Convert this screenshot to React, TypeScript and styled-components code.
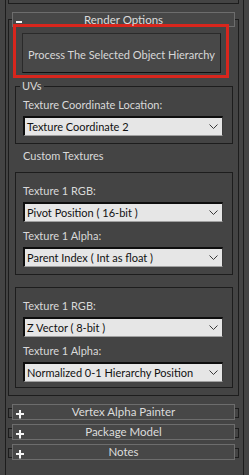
import styled, { createGlobalStyle } from "styled-components";

const GlobalStyle = createGlobalStyle`
    html, body {
        margin: 0;
        background: #444444;
    }
    body {
        font-family: Lato, "Liberation Sans", sans-serif;
        font-size: 11px;
        color: #d9d9d9;
    }
`;

const Page = styled.div`
    width: 249px;
    height: 475px;
    overflow: hidden;
    box-sizing: border-box;
    padding-left: 5px;
    background: #444444;
`;

const Frame = styled.div`
    width: 239px;
    height: 100%;
    box-sizing: border-box;
    border-left: 1px solid #1d1d1d;
    border-right: 1px solid #1d1d1d;
`;

const PrevTail = styled.div`
    height: 4px;
    box-sizing: border-box;
    margin: 0 4px 0 2px;
    border: 1px solid #1d1d1d;
    border-top: 0;
`;

const Rollout = styled.div`
    margin: 15px 4px 0 2px;
    border: 1px solid #1d1d1d;
    padding-bottom: 7px;
`;

const ClosedRollout = styled.div<{ $first?: boolean }>`
    margin: ${(p) => (p.$first ? "12px" : "10px")} 4px 0 2px;
    border: 1px solid #1d1d1d;
`;

const Header = styled.div<{ $closed?: boolean }>`
    display: grid;
    grid-template-columns: 20px 1fr 20px;
    height: ${(p) => (p.$closed ? "16px" : "15px")};
    box-sizing: border-box;
    margin: ${(p) => (p.$closed ? "-5px 3px -3px" : "-8px 3px 0")};
    border: 1px solid #6d6d6d;
    background: #474747;
    color: #dcdcdc;
    line-height: ${(p) => (p.$closed ? "14px" : "13px")};
    font-size: 11.5px;
`;

const HeaderTitle = styled.span`
    text-align: center;
    white-space: nowrap;
`;

const Sign = styled.svg`
    display: block;
    margin: 5px 0 0 3px;
`;

const Highlight = styled.div`
    display: flex;
    width: 216px;
    height: 54px;
    box-sizing: border-box;
    margin: -3px 0 0 4px;
    border: 3px solid #d8261d;
    padding: 6px 5px 2px 6px;
`;

const ActionButton = styled.button`
    flex: 1;
    margin: 0;
    padding: 3px 0 0;
    font-family: inherit;
    font-size: 11px;
    color: #d8d8d8;
    background: #484848;
    border: 1px solid #2a2a2a;
    border-right-color: #1a1a1a;
    border-bottom-color: #101010;
`;

const GroupBox = styled.fieldset`
    min-width: 0;
    margin: 2px 5px 0 6px;
    padding: 0 9px 7px 4px;
    border: 1px solid #1d1d1d;
`;

const Legend = styled.legend`
    padding: 0 2px;
    line-height: 12px;
    font-size: 11px;
`;

const Group = styled.div<{ $gap: number; $bottom: number }>`
    margin: ${(p) => p.$gap}px 5px 0 6px;
    border: 1px solid #1d1d1d;
    padding: 11px 9px ${(p) => p.$bottom}px 7px;
`;

const Label = styled.div<{ $top?: number; $left?: number }>`
    margin: ${(p) => p.$top ?? 0}px 0 0 ${(p) => p.$left ?? 0}px;
    line-height: 14px;
    white-space: nowrap;
`;

const Select = styled.div<{ $left?: number }>`
    display: flex;
    align-items: center;
    justify-content: space-between;
    height: 20px;
    box-sizing: border-box;
    margin: 4px 0 0 ${(p) => p.$left ?? 0}px;
    padding: 0 4px 0 2px;
    background: #e6e6e6;
    border-top: 2px solid #0e0e0e;
    border-left: 2px solid #0e0e0e;
    border-right: 1px solid #3c3c3c;
    border-bottom: 1px solid #a0a0a0;
    color: #111111;
    white-space: nowrap;
`;

const Chevron = () => (
    <svg width="9" height="5" viewBox="0 0 9 5">
        <polyline points="0.5,0.5 4.5,4.5 8.5,0.5" fill="none" stroke="#3a3a3a" strokeWidth="1" />
    </svg>
);

function Toggle({ open }: { open?: boolean }) {
    return (
        <Sign width="9" height="9" viewBox="0 0 9 9">
            {open ? (
                <rect x="0" y="3" width="6" height="2" fill="#f4f4f4" />
            ) : (
                <>
                    <rect x="0" y="3" width="8" height="2" fill="#f4f4f4" />
                    <rect x="3" y="0" width="2" height="8.5" fill="#f4f4f4" />
                </>
            )}
        </Sign>
    );
}

function Dropdown({ value, left }: { value: string; left?: number }) {
    return (
        <Select $left={left}>
            <span>{value}</span>
            <Chevron />
        </Select>
    );
}

function TextureSet({ gap, bottom, rgb, alpha }: { gap: number; bottom: number; rgb: string; alpha: string }) {
    return (
        <Group $gap={gap} $bottom={bottom}>
            <Label>Texture 1 RGB:</Label>
            <Dropdown value={rgb} />
            <Label $top={7}>Texture 1 Alpha:</Label>
            <Dropdown value={alpha} />
        </Group>
    );
}

const closed = ["Vertex Alpha Painter", "Package Model", "Notes"];

export default function App() {
    return (
        <Page>
            <GlobalStyle />
            <Frame>
                <PrevTail />
                <Rollout>
                    <Header>
                        <Toggle open />
                        <HeaderTitle>Render Options</HeaderTitle>
                    </Header>
                    <Highlight>
                        <ActionButton>Process The Selected Object Hierarchy</ActionButton>
                    </Highlight>
                    <GroupBox>
                        <Legend>UVs</Legend>
                        <Label $top={6} $left={3}>
                            Texture Coordinate Location:
                        </Label>
                        <Dropdown value="Texture Coordinate 2" left={3} />
                    </GroupBox>
                    <Label $top={5} $left={14}>
                        Custom Textures
                    </Label>
                    <TextureSet
                        gap={9}
                        bottom={7}
                        rgb="Pivot Position ( 16-bit )"
                        alpha="Parent Index ( Int as float )"
                    />
                    <TextureSet
                        gap={12}
                        bottom={5}
                        rgb="Z Vector ( 8-bit )"
                        alpha="Normalized 0-1 Hierarchy Position"
                    />
                </Rollout>
                {closed.map((title, i) => (
                    <ClosedRollout key={title} $first={i === 0}>
                        <Header $closed>
                            <Toggle />
                            <HeaderTitle>{title}</HeaderTitle>
                        </Header>
                    </ClosedRollout>
                ))}
            </Frame>
        </Page>
    );
}
